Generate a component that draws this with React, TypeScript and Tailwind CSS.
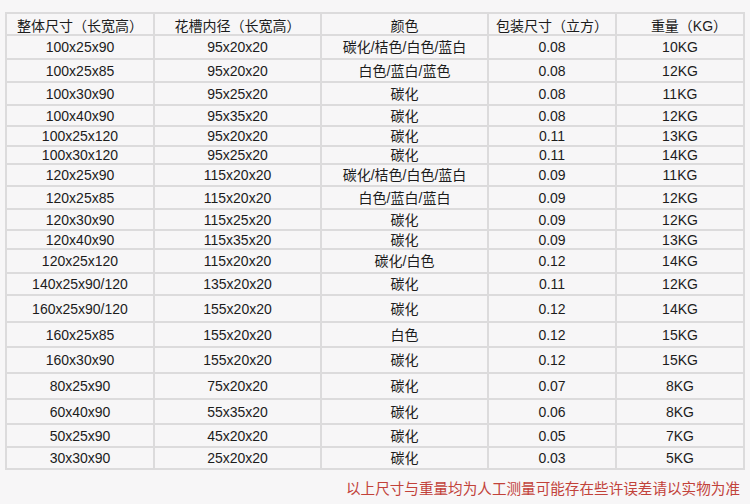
import React from 'react';

type Row = {
  size: string;
  inner: string;
  color: string;
  pack: string;
  weight: string;
  h: number;
};

const HEADERS = ['整体尺寸（长宽高）', '花槽内径（长宽高）', '颜色', '包装尺寸（立方）'];

// row heights read off the reference, px
const ROWS: Row[] = [
  { size: '100x25x90', inner: '95x20x20', color: '碳化/桔色/白色/蓝白', pack: '0.08', weight: '10KG', h: 24 },
  { size: '100x25x85', inner: '95x20x20', color: '白色/蓝白/蓝色', pack: '0.08', weight: '12KG', h: 23 },
  { size: '100x30x90', inner: '95x25x20', color: '碳化', pack: '0.08', weight: '11KG', h: 23 },
  { size: '100x40x90', inner: '95x35x20', color: '碳化', pack: '0.08', weight: '12KG', h: 21 },
  { size: '100x25x120', inner: '95x20x20', color: '碳化', pack: '0.11', weight: '13KG', h: 20 },
  { size: '100x30x120', inner: '95x25x20', color: '碳化', pack: '0.11', weight: '14KG', h: 18 },
  { size: '120x25x90', inner: '115x20x20', color: '碳化/桔色/白色/蓝白', pack: '0.09', weight: '11KG', h: 22 },
  { size: '120x25x85', inner: '115x20x20', color: '白色/蓝白/蓝白', pack: '0.09', weight: '12KG', h: 23 },
  { size: '120x30x90', inner: '115x25x20', color: '碳化', pack: '0.09', weight: '12KG', h: 21 },
  { size: '120x40x90', inner: '115x35x20', color: '碳化', pack: '0.09', weight: '13KG', h: 19 },
  { size: '120x25x120', inner: '115x20x20', color: '碳化/白色', pack: '0.12', weight: '14KG', h: 24 },
  { size: '140x25x90/120', inner: '135x20x20', color: '碳化', pack: '0.11', weight: '12KG', h: 22 },
  { size: '160x25x90/120', inner: '155x20x20', color: '碳化', pack: '0.12', weight: '14KG', h: 27 },
  { size: '160x25x85', inner: '155x20x20', color: '白色', pack: '0.12', weight: '15KG', h: 25 },
  { size: '160x30x90', inner: '155x20x20', color: '碳化', pack: '0.12', weight: '15KG', h: 26 },
  { size: '80x25x90', inner: '75x20x20', color: '碳化', pack: '0.07', weight: '8KG', h: 26 },
  { size: '60x40x90', inner: '55x35x20', color: '碳化', pack: '0.06', weight: '8KG', h: 25 },
  { size: '50x25x90', inner: '45x20x20', color: '碳化', pack: '0.05', weight: '7KG', h: 23 },
  { size: '30x30x90', inner: '25x20x20', color: '碳化', pack: '0.03', weight: '5KG', h: 22 },
];

const cell = 'border-2 border-[#dcdbdc] text-center align-middle p-0 leading-none';

export default function App() {
  return (
    <div
      className="w-[750px] h-[504px] bg-[#f7f6f7] text-[#1c1c1c] text-[14px] overflow-hidden"
      style={{ fontFamily: '"Liberation Sans", "Noto Sans CJK SC", sans-serif' }}
    >
      <div className="pt-[12px] pl-[5px]">
        <table className="border-collapse table-fixed w-[738px]">
          <colgroup>
            <col className="w-[148px]" />
            <col className="w-[167px]" />
            <col className="w-[167px]" />
            <col className="w-[128px]" />
            <col className="w-[128px]" />
          </colgroup>
          <thead>
            <tr className="h-[22px]">
              {HEADERS.map((t) => (
                <th key={t} className={`${cell} font-normal pt-[3px]`}>
                  {t}
                </th>
              ))}
              <th className={`${cell} font-normal pt-[3px] pl-[18px]`}>重量（KG）</th>
            </tr>
          </thead>
          <tbody>
            {ROWS.map((r, i) => (
              <tr key={i} style={{ height: r.h }}>
                <td className={cell}>{r.size}</td>
                <td className={cell}>{r.inner}</td>
                <td className={cell}>{r.color}</td>
                <td className={cell}>{r.pack}</td>
                <td className={cell}>{r.weight}</td>
              </tr>
            ))}
          </tbody>
        </table>
      </div>

      {/* footnote */}
      <div className="flex justify-end pr-[10px] pt-[9px]">
        <span className="text-[14.6px] text-[#c2423a]">以上尺寸与重量均为人工测量可能存在些许误差请以实物为准</span>
      </div>
    </div>
  );
}
